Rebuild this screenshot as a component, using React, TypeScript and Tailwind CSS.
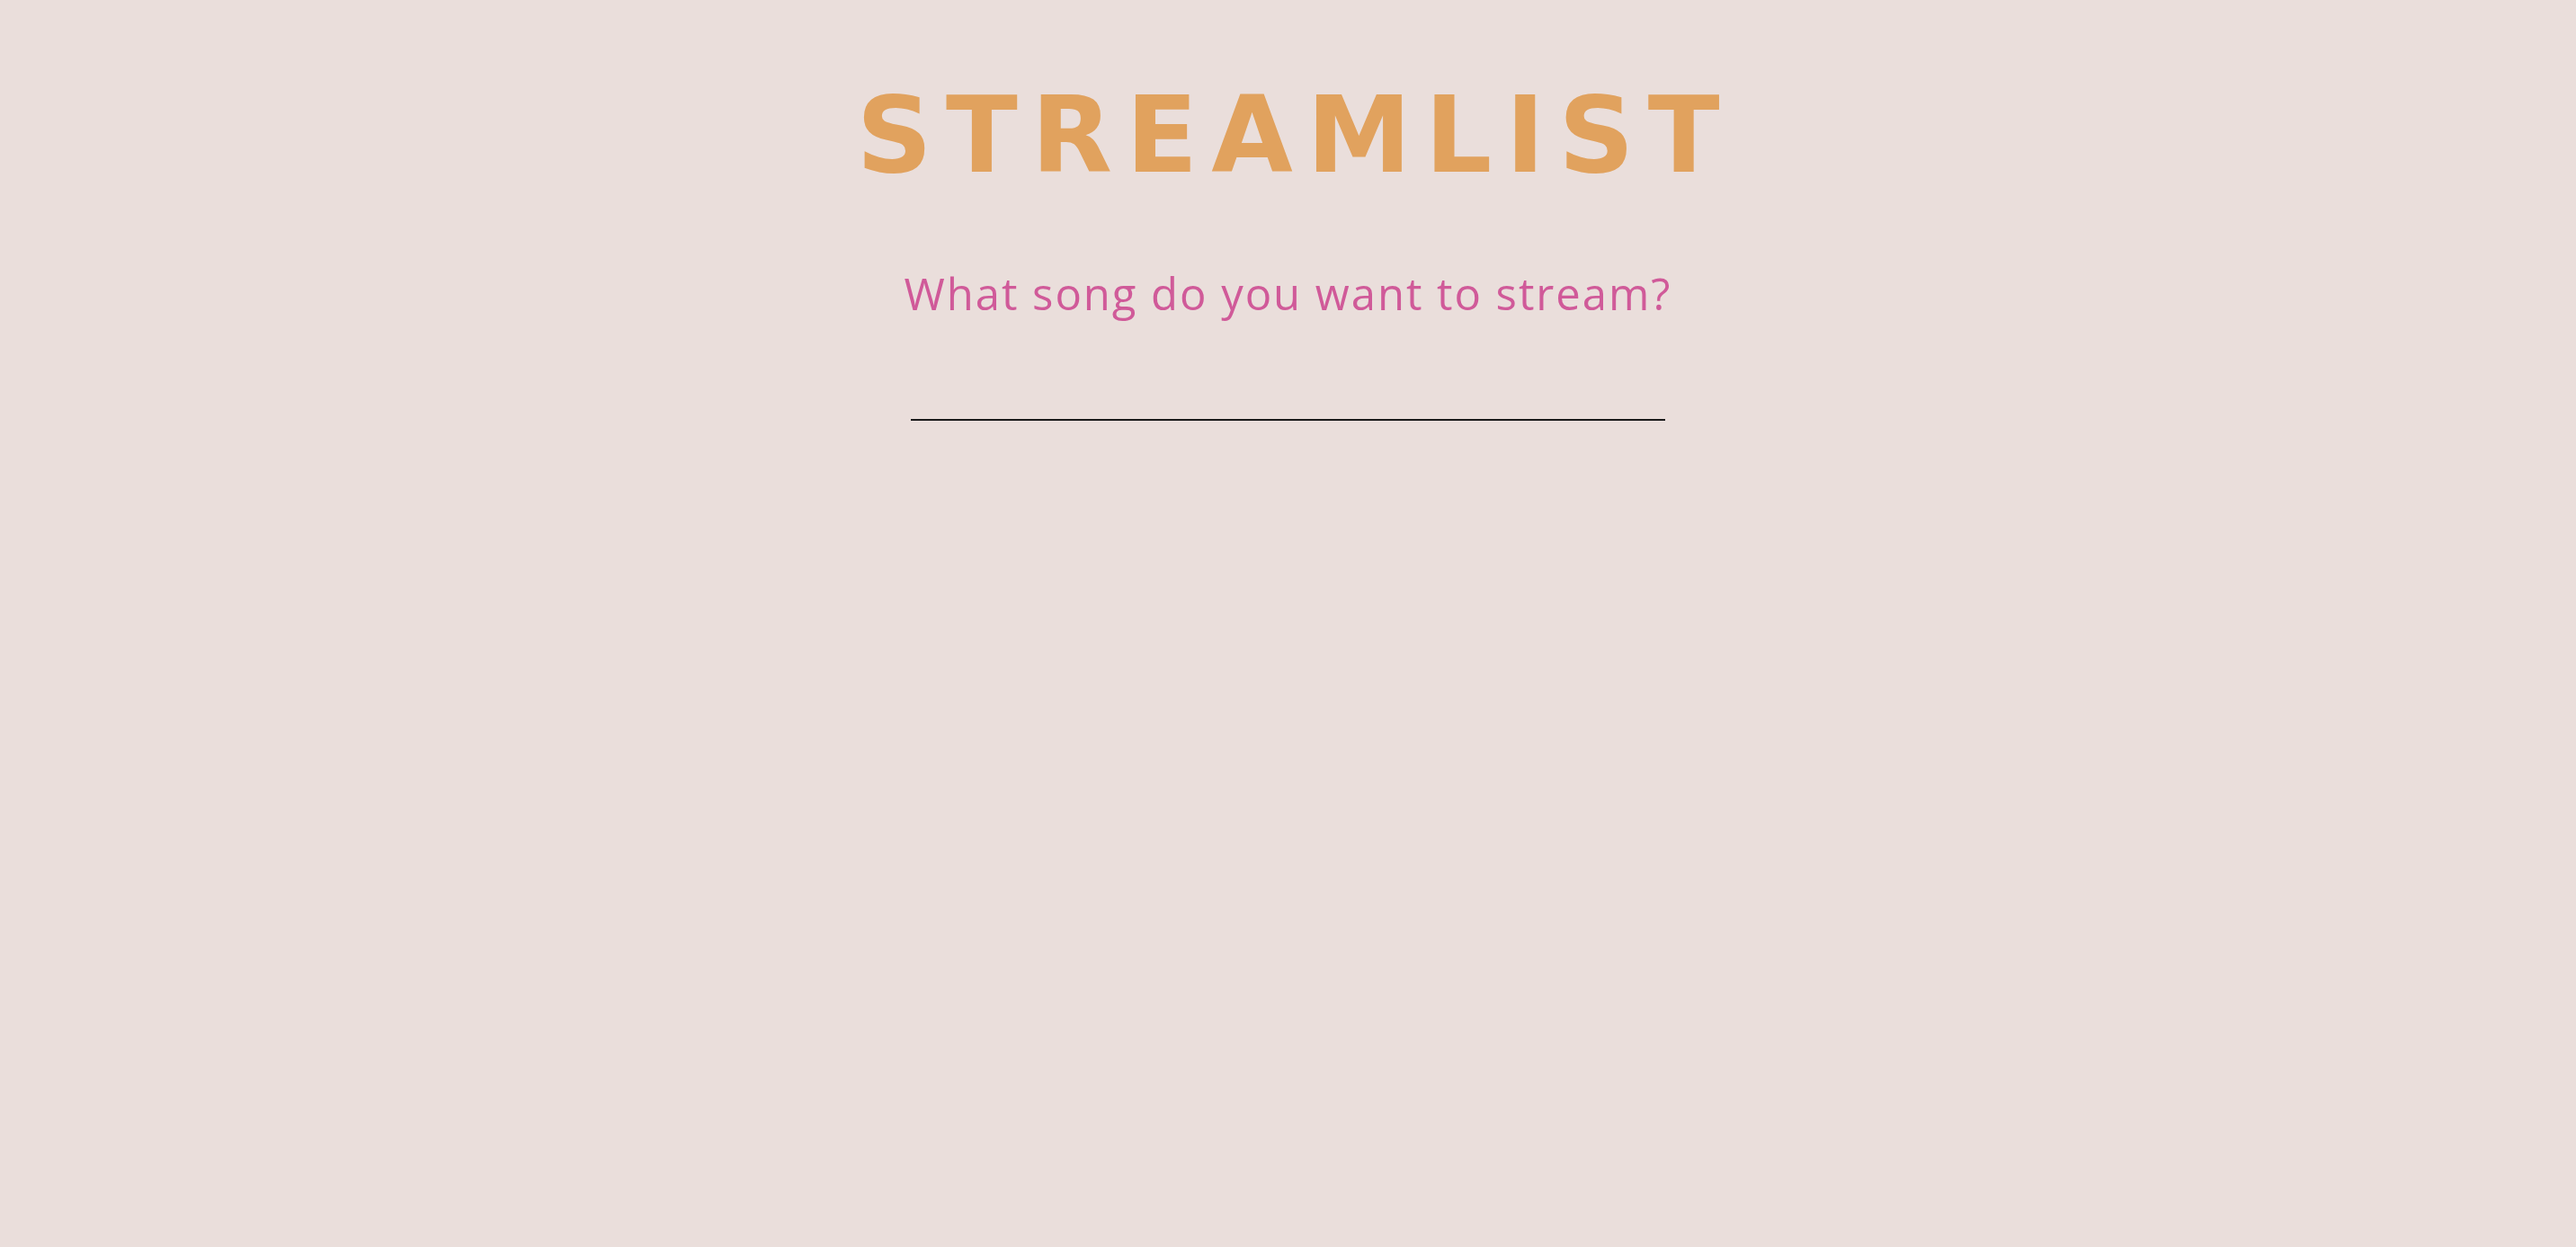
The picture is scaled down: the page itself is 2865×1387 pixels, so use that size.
export default function App() {
  return (
    <div className="min-h-screen w-full bg-[#eadedb] flex flex-col items-center">
      <h1 className="pt-[92px] text-[117px] leading-none font-bold tracking-[0.13em] mr-[-0.13em] text-[#e1a25e] font-['DejaVu_Sans',sans-serif]">
        STREAMLIST
      </h1>
      <p className="mt-[93px] text-[49px] leading-none tracking-[0.04em] text-[#d05a99] font-['Open_Sans',sans-serif]">
        What song do you want to stream?
      </p>
      <input
        type="text"
        className="mt-[75px] w-[839px] h-[42px] bg-transparent border-b-2 border-[#1a1a1a] outline-none text-[30px] text-[#1a1a1a]"
      />
    </div>
  );
}
